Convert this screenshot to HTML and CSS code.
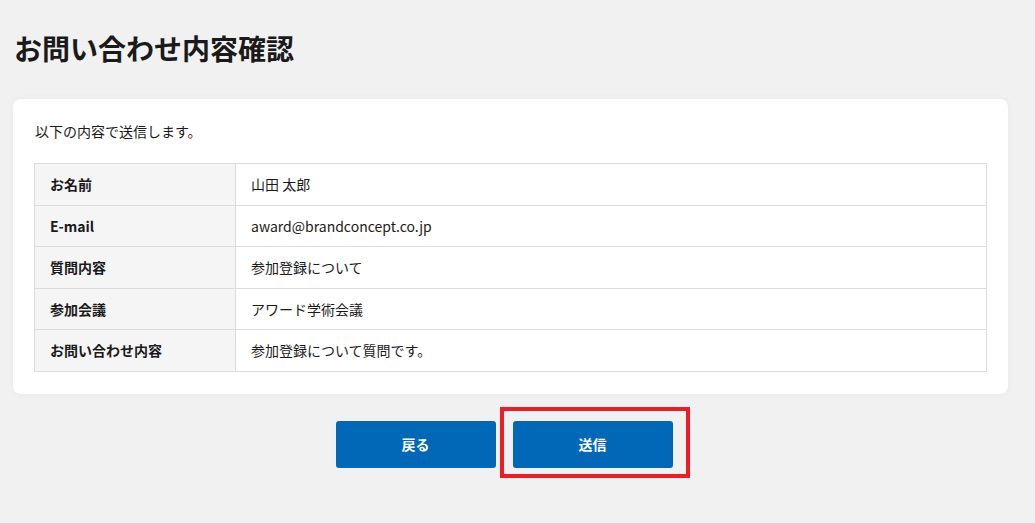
FILE: index.html
```html
<!DOCTYPE html>
<html lang="ja">
<head>
    <meta charset="UTF-8">
    <meta name="viewport" content="width=device-width, initial-scale=1.0">
    <title>お問い合わせ内容確認</title>
    <link rel="stylesheet" href="styles.css">
</head>
<body>

    <div class="page">
        <h1 class="page-title">お問い合わせ内容確認</h1>

        <!-- Confirm Card -->
        <div class="card">
            <p class="lead">以下の内容で送信します。</p>
            <table class="confirm-table">
                <tr>
                    <th>お名前</th>
                    <td>山田 太郎</td>
                </tr>
                <tr>
                    <th>E-mail</th>
                    <td>award@brandconcept.co.jp</td>
                </tr>
                <tr>
                    <th>質問内容</th>
                    <td>参加登録について</td>
                </tr>
                <tr>
                    <th>参加会議</th>
                    <td>アワード学術会議</td>
                </tr>
                <tr>
                    <th>お問い合わせ内容</th>
                    <td>参加登録について質問です。</td>
                </tr>
            </table>
        </div>

        <!-- Buttons -->
        <div class="actions">
            <button class="btn">戻る</button>
            <div class="marked">
                <button class="btn">送信</button>
            </div>
        </div>
    </div>

</body>
</html>
```

FILE: styles.css
```css
body {
    font-family: "Noto Sans CJK JP", "Noto Sans", sans-serif;
    margin: 0;
    padding: 0;
    background-color: #f1f1f1;
    color: #1a1a1a;
}

.page {
    width: 995px;
    padding: 0 13px 55px;
}

.page-title {
    font-size: 28px;
    font-weight: bold;
    line-height: 42px;
    margin: 27px 0 30px 1px;
}

/* Card */
.card {
    background: white;
    border-radius: 8px;
    padding: 22px 21px;
    box-shadow: 0 0 8px rgba(0, 0, 0, 0.04);
}
.lead {
    font-size: 14px;
    line-height: 21px;
    margin: 0 0 21px 1px;
}

/* Table */
.confirm-table {
    width: 100%;
    border-collapse: collapse;
    font-size: 14px;
}
.confirm-table th,
.confirm-table td {
    border: 1px solid #dcdcdc;
    padding: 10px 15px;
    line-height: 20.6px;
    text-align: left;
}
.confirm-table th {
    width: 170px;
    background: #f5f5f5;
    font-weight: bold;
}
.confirm-table td {
    font-weight: normal;
}

/* Buttons */
.actions {
    display: flex;
    justify-content: center;
    gap: 17px;
    margin-top: 27px;
    padding-right: 13px;
}
.btn {
    display: block;
    width: 160px;
    padding: 13px 0;
    font-family: inherit;
    font-size: 14px;
    font-weight: bold;
    line-height: 21px;
    color: white;
    background-color: #0068b7;
    border: none;
    border-radius: 3px;
    cursor: pointer;
}

/* red marker round the send button */
.marked {
    position: relative;
}
.marked::after {
    content: "";
    position: absolute;
    top: -14px;
    left: -13px;
    right: -17px;
    bottom: -10px;
    border: 4px solid #ee1c25;
    pointer-events: none;
}
```
